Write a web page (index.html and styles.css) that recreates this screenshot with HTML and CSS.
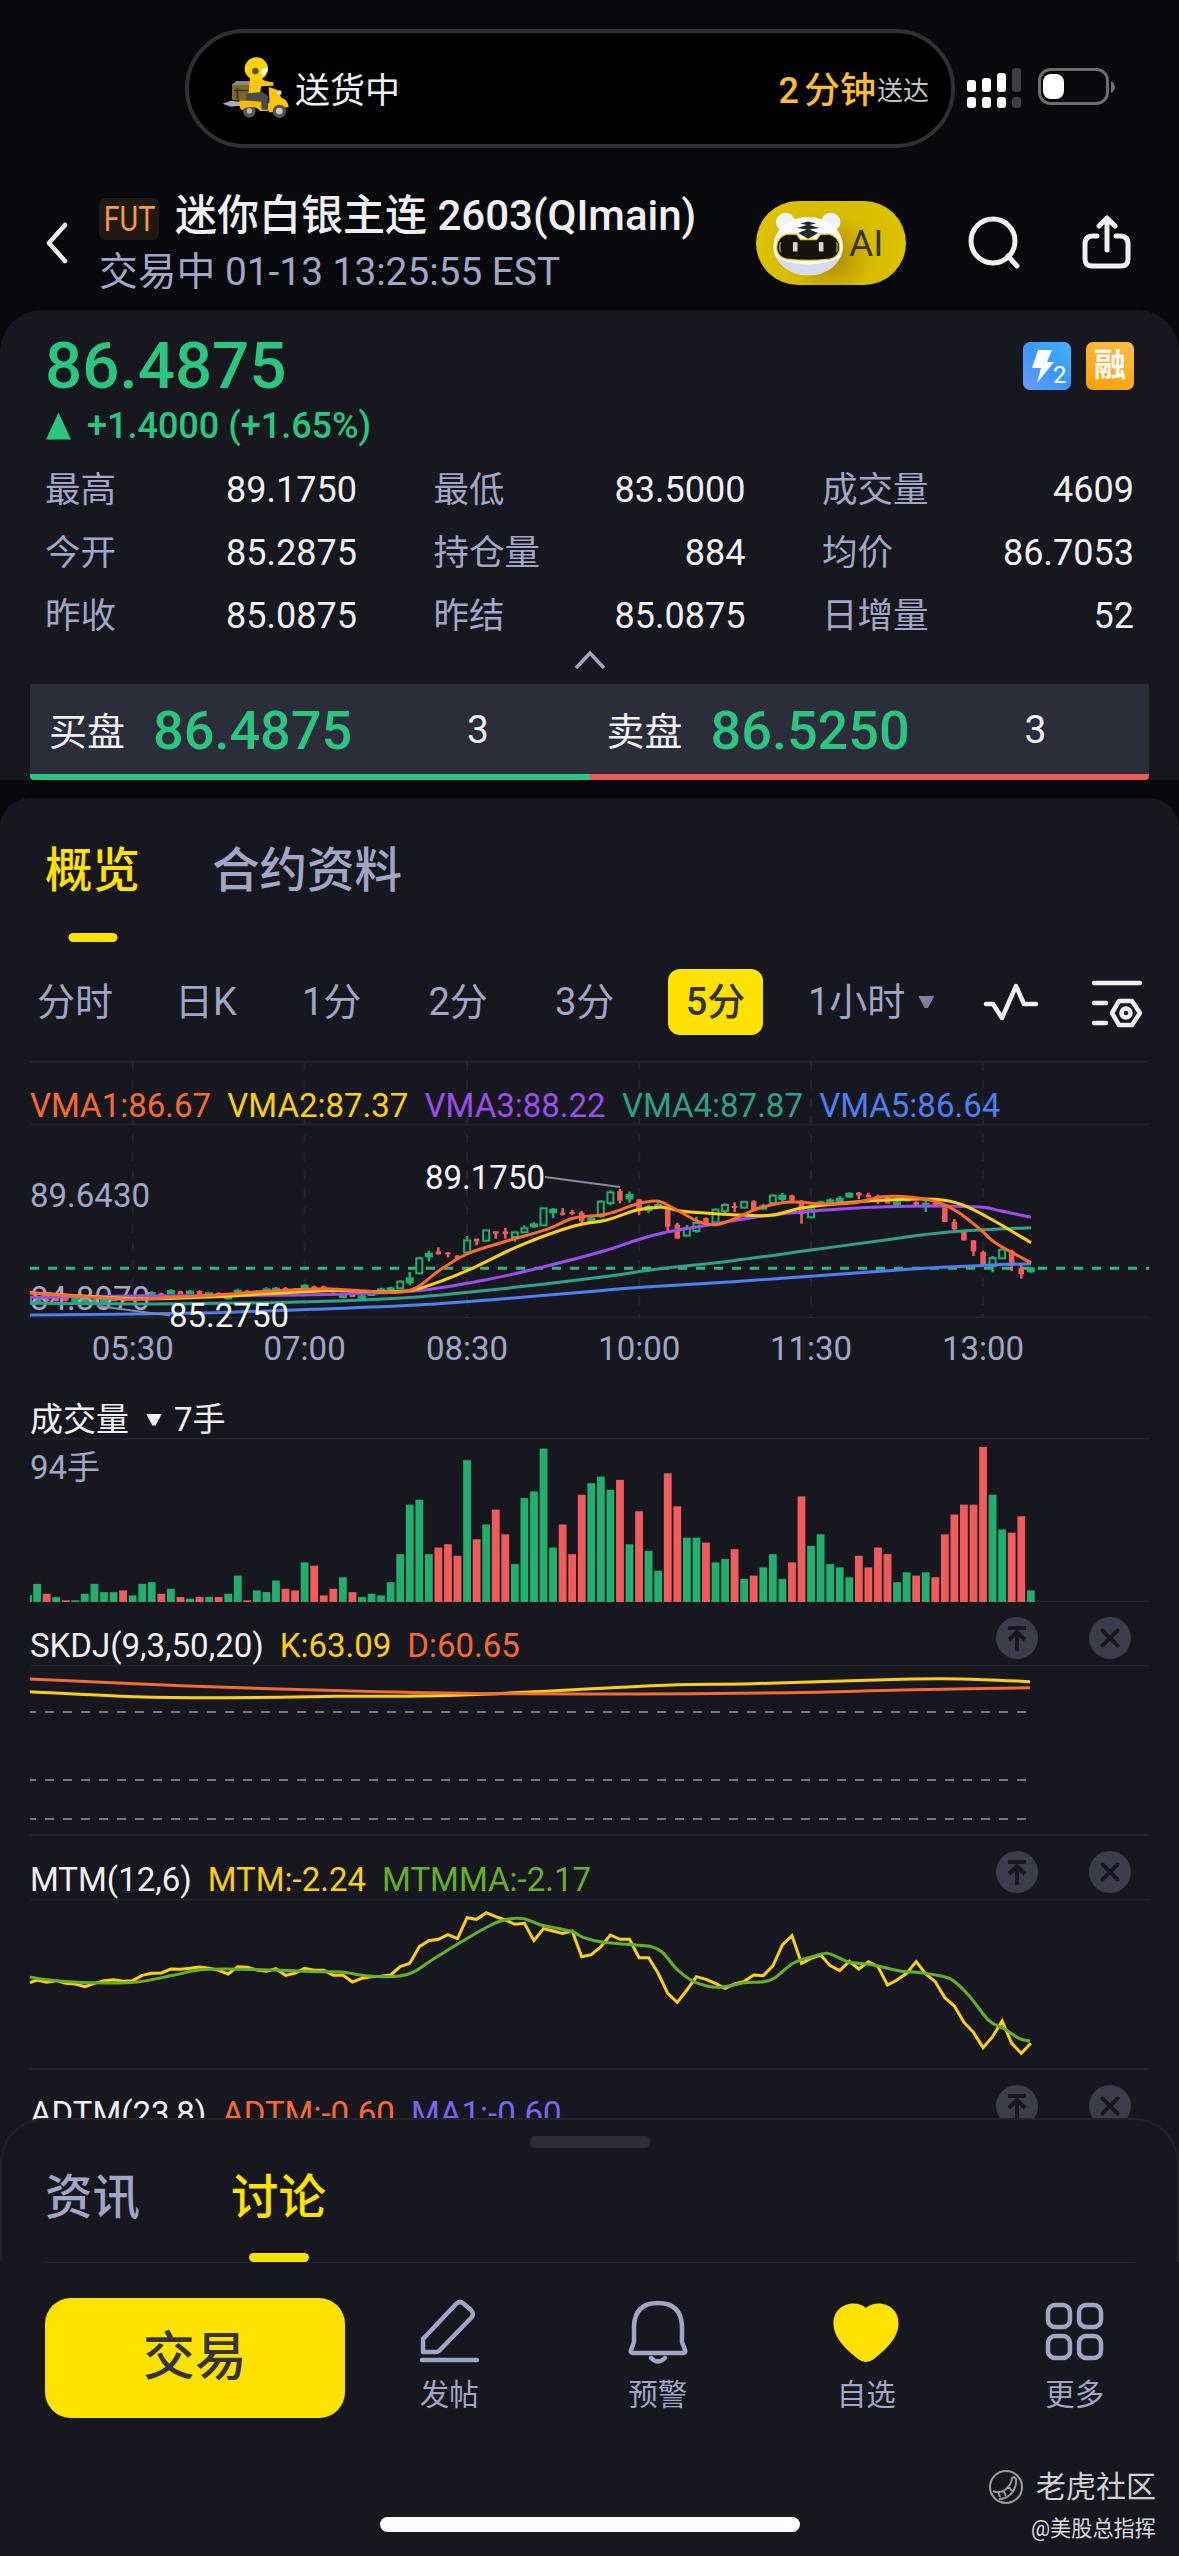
FILE: index.html
```html
<!DOCTYPE html>
<html lang="zh-CN">
<head>
    <meta charset="UTF-8">
    <meta name="viewport" content="width=device-width, initial-scale=1.0">
    <title>迷你白银主连 2603(QImain)</title>
    <link rel="stylesheet" href="styles.css">
</head>
<body>
    <!-- 状态栏 -->
    <div class="status-bar">
        <div class="island">
            <svg class="rider" viewBox="36 44 204 192">
                <path d="M38 190 L62 181 L92 184 L90 196 L62 199Z" fill="#aab"/>
                <circle cx="118" cy="213" r="19" fill="#555"/><circle cx="118" cy="212" r="8" fill="#bbb"/>
                <path d="M88 180h70l22 10-4 22h-26q-8-12-28-12-18 0-24 10-12-4-10-30z" fill="#f3bb08"/>
                <rect x="66" y="128" width="54" height="52" rx="5" fill="#7a6a22"/>
                <path d="M66 134l12-12h42v12z" fill="#8b8b8b"/>
                <path d="M72 148h44v5H72zM80 142h5v34h-5z" fill="#2e2b22"/>
                <path d="M120 112l26-2 20 12 24 4v10l-36 2-4 22-34-2z" fill="#ffc60c"/>
                <path d="M106 160l50-6 18 12v42h-20v-24l-46-4z" fill="#4b4b4d"/>
                <path d="M176 140l26 8 12 24q20 6 22 28l-14 2q-10-8-24 0l-4 14h-18l2-40z" fill="#ffc505"/>
                <circle cx="208" cy="157" r="7" fill="#ddd"/>
                <circle cx="208" cy="213" r="20" fill="#555"/><circle cx="208" cy="212" r="10" fill="#ccc"/>
                <ellipse cx="139" cy="85" rx="35" ry="34" fill="#ffd20a"/>
                <path d="M158 86l15-4q-2 18-16 22-7-8 1-18z" fill="#fff"/>
                <circle cx="136" cy="92" r="10" fill="#5b552c"/>
            </svg>
            <span class="island-title">送货中</span>
            <span class="eta"><i>2</i>分钟</span>
            <span class="eta-tail">送达</span>
        </div>
        <svg class="signal" viewBox="0 0 56 42">
            <g fill="#fff">
                <rect x="1" y="14" width="9" height="12" rx="3"/><rect x="16" y="12" width="9" height="14" rx="3"/>
                <rect x="31" y="7" width="9" height="19" rx="3"/>
                <rect x="1" y="31" width="9" height="11" rx="3"/><rect x="16" y="31" width="9" height="11" rx="3"/>
                <rect x="31" y="31" width="9" height="11" rx="3"/>
            </g>
            <g fill="#3c3d40"><rect x="46" y="2" width="9" height="24" rx="3"/><rect x="46" y="31" width="9" height="11" rx="3"/></g>
        </svg>
        <svg class="battery" viewBox="0 0 80 40">
            <rect x="2.5" y="2.5" width="68" height="34" rx="11" fill="none" stroke="#6d6d70" stroke-width="3"/>
            <rect x="6" y="7" width="21" height="25" rx="8" fill="#fff"/>
            <path d="M74 14q4 2 4 6t-4 6z" fill="#6d6d70"/>
        </svg>
    </div>

    <!-- 标题 -->
    <div class="header">
        <svg class="back" viewBox="0 0 24 44"><path d="M20 4L4 22l16 18"/></svg>
        <div class="header-info">
            <div class="name-row">
                <span class="fut"><i>FUT</i></span>
                <h1>迷你白银主连 2603(QImain)</h1>
            </div>
            <div class="trade-time">交易中 01-13 13:25:55 EST</div>
        </div>
        <div class="ai-btn">
            <svg viewBox="96 62 220 200">
                <circle cx="137" cy="98" r="29" fill="#f1f3fb"/><circle cx="273" cy="98" r="29" fill="#f1f3fb"/>
                <ellipse cx="205" cy="170" rx="105" ry="88" fill="#fbfbff"/>
                <path d="M112 205q90 40 188 0-22 50-95 52-72-2-93-52z" fill="#d6daea"/>
                <path d="M140 134h30l12 16h48l12-16h28q30 10 30 39t-30 36q-64 8-130 0-30-7-30-36t30-39z" fill="#17120c" stroke="#e4d71b" stroke-width="4"/>
                <path d="M205 96l-24 6 20 4-30 9 30 5-26 10 30 18 30-18-26-10 30-5-30-9 20-4z" fill="#25272c"/>
                <rect x="159" y="158" width="14" height="28" fill="#d5d5d5"/><rect x="237" y="158" width="14" height="28" fill="#d5d5d5"/>
                <path d="M122 158q-6 14 0 30M290 158q6 14 0 30" stroke="#777" stroke-width="6" fill="none"/>
            </svg>
            <span>AI</span>
        </div>
        <svg class="head-icon search" viewBox="0 0 60 60"><circle cx="26" cy="28" r="22"/><path d="M41 43l9 10"/></svg>
        <svg class="head-icon share" viewBox="0 0 60 60"><path d="M20 23h-4q-8 0-8 8v15q0 7 7 7h29q7 0 7-7V31q0-8-8-8h-4M30 37V6M22 13l8-8 8 8"/></svg>
    </div>

    <!-- 行情 -->
    <div class="quote-card">
        <div class="price-row">
            <span class="price">86.4875</span>
            <svg class="tag" viewBox="0 0 48 48">
                <defs><linearGradient id="blue" x1="0" y1="1" x2="1" y2="0"><stop offset="0" stop-color="#6b9dff"/><stop offset=".5" stop-color="#3b97fa"/><stop offset="1" stop-color="#45b4f8"/></linearGradient></defs>
                <rect width="48" height="48" rx="7" fill="url(#blue)"/>
                <path d="M15 8h14l-5 12h7L14 41l4-15h-9z" fill="#fff"/>
                <text x="30" y="41" font-size="24" fill="#fff">2</text>
            </svg>
            <span class="tag rong">融</span>
        </div>
        <div class="change"><i class="up"></i>+1.4000 (+1.65%)</div>
        <div class="stats">
            <div><label>最高</label><b>89.1750</b></div>
            <div><label>最低</label><b>83.5000</b></div>
            <div><label>成交量</label><b>4609</b></div>
            <div><label>今开</label><b>85.2875</b></div>
            <div><label>持仓量</label><b>884</b></div>
            <div><label>均价</label><b>86.7053</b></div>
            <div><label>昨收</label><b>85.0875</b></div>
            <div><label>昨结</label><b>85.0875</b></div>
            <div><label>日增量</label><b>52</b></div>
        </div>
        <svg class="fold" viewBox="0 0 32 20"><path d="M2 18L16 3l14 15"/></svg>
        <div class="order-book">
            <div class="side buy"><span>买盘</span><b>86.4875</b><em>3</em></div>
            <div class="side sell"><span>卖盘</span><b>86.5250</b><em>3</em></div>
        </div>
    </div>

    <!-- 图表 -->
    <div class="chart-card">
        <div class="tabs">
            <span class="tab active">概览</span>
            <span class="tab">合约资料</span>
        </div>
        <div class="periods">
            <span>分时</span><span>日K</span><span>1分</span><span>2分</span><span>3分</span>
            <span class="on">5分</span>
            <span class="hour">1小时<i class="down"></i></span>
            <svg class="wave" viewBox="0 0 56 40"><path d="M3 22h7l9 14L33 4l8 18h12"/></svg>
            <svg class="setting" viewBox="0 0 54 52">
                <path d="M4 4h46M4 24h12M4 44h12"/>
                <path d="M29 22h13l8 12-8 12H29l-7-12z"/><circle cx="36" cy="34" r="4.5"/>
            </svg>
        </div>

        <svg id="kline" width="1179" height="314" viewBox="0 1061 1179 314"></svg>

        <div class="panel-head volume-head">
            <span class="w">成交量</span><i class="down white"></i><span class="w">7手</span>
        </div>
        <svg id="volume" width="1179" height="164" viewBox="0 1438 1179 164"></svg>

        <div class="panel-head">
            <span class="w">SKDJ(9,3,50,20)</span><span class="c-yellow">K:63.09</span><span class="c-orange">D:60.65</span>
            <svg class="ctl first" viewBox="0 0 42 42"><use href="#top"/></svg>
            <svg class="ctl" viewBox="0 0 42 42"><use href="#close"/></svg>
        </div>
        <svg id="skdj" width="1179" height="171" viewBox="0 1665 1179 171"></svg>

        <div class="panel-head">
            <span class="w">MTM(12,6)</span><span class="c-yellow">MTM:-2.24</span><span class="c-green">MTMMA:-2.17</span>
            <svg class="ctl first" viewBox="0 0 42 42"><use href="#top"/></svg>
            <svg class="ctl" viewBox="0 0 42 42"><use href="#close"/></svg>
        </div>
        <svg id="mtm" width="1179" height="171" viewBox="0 49 1179 171"></svg>

        <div class="panel-head">
            <span class="w">ADTM(23,8)</span><span class="c-orange">ADTM:-0.60</span><span class="c-violet">MA1:-0.60</span>
            <svg class="ctl first" viewBox="0 0 42 42"><use href="#top"/></svg>
            <svg class="ctl" viewBox="0 0 42 42"><use href="#close"/></svg>
        </div>
    </div>

    <!-- 底部 -->
    <div class="sheet">
        <div class="sheet-top">
            <div class="handle"></div>
            <div class="sheet-tabs">
                <span class="tab">资讯</span>
                <span class="tab active">讨论</span>
            </div>
        </div>
        <div class="toolbar">
            <div class="trade-btn">交易</div>
            <div class="tool">
                <svg viewBox="0 0 72 72"><path d="M10 56V43L43 8q4-4 8 0l7 6q4 4 0 8L26 55q-1 1-3 1zM9 64h55"/></svg>
                发帖
            </div>
            <div class="tool">
                <svg viewBox="0 0 72 72"><path d="M12 46V30Q13 7 36 7t24 23v16l3 8q1 3-2 3H11q-3 0-2-3z"/><path d="M29 62q7 7 14 0"/></svg>
                预警
            </div>
            <div class="tool">
                <svg viewBox="0 0 72 72"><path class="heart" d="M36 12C27 3 3 7 3.500 28 4 43 17 54 28 63q8 6 16 0C55 54 68 43 68.500 28 69 7 45 3 36 12z"/></svg>
                自选
            </div>
            <div class="tool">
                <svg viewBox="0 0 72 72"><rect x="9" y="9" width="22" height="22" rx="7"/><rect x="40" y="9" width="22" height="22" rx="7"/><rect x="9" y="40" width="22" height="22" rx="7"/><rect x="40" y="40" width="22" height="22" rx="7"/></svg>
                更多
            </div>
        </div>
        <div class="home-bar"></div>
        <div class="watermark">
            <div class="brand">
                <svg viewBox="0 0 36 36"><circle cx="18" cy="18" r="16"/><path d="M5 22q6 3 12-1 7-6 7-12 2-2 4 1 1 9-6 16-5 4-11 4M10 22l2 6M15 21l3 6M20 17l4 5"/></svg>
                老虎社区
            </div>
            <div class="author">@美股总指挥</div>
        </div>
    </div>

    <svg width="0" height="0" class="defs">
        <symbol id="top" viewBox="0 0 42 42"><circle cx="21" cy="21" r="21" fill="#3c3d4c"/><path d="M12 11h18M21 34V15M13 23l8-8 8 8" fill="none" stroke="#17181f" stroke-width="4"/></symbol>
        <symbol id="close" viewBox="0 0 42 42"><circle cx="21" cy="21" r="21" fill="#3c3d4c"/><path d="M13.500 13.500l15 15M28.500 13.500l-15 15" fill="none" stroke="#17181f" stroke-width="4" stroke-linecap="round"/></symbol>
    </svg>
    <script src="chart.js"></script>
</body>
</html>
```
FILE: styles.css
```css
:root {
    --bg: #07090c;
    --card: #17181f;
    --muted: #a3a5c6;
    --text: #f0f0f2;
    --green: #2bc57f;
    --red: #ee5a5a;
    --yellow: #ffe200;
}

* { box-sizing: border-box; }

body {
    margin: 0;
    width: 1179px;
    height: 2556px;
    overflow: hidden;
    position: relative;
    background: var(--bg);
    color: var(--text);
    font-family: Roboto, 'Noto Sans CJK SC', sans-serif;
}

i, em { font-style: normal; }
svg { display: block; flex: none; }
.defs { position: absolute; }

/* 状态栏 */
.status-bar {
    display: flex;
    align-items: flex-start;
    height: 190px;
    padding: 29px 0 0 185px;
}

.island {
    display: flex;
    align-items: center;
    width: 770px;
    height: 119px;
    padding: 0 22px 0 33px;
    border: 4px solid #303032;
    border-radius: 60px;
    background: #000;
}

.rider { width: 68px; height: 64px; margin-top: -4px; }
.island-title { margin: -3px 0 0 5px; font-size: 35px; }
.eta { margin: -3px 0 0 auto; font-size: 36px; font-weight: 500; color: #f9bd30; }
.eta i { margin-right: 5px; }
.eta-tail { margin: -1px 0 0 1px; font-size: 26px; color: #c4c4c4; }
.signal { width: 56px; height: 42px; margin: 37px 0 0 11px; }
.battery { width: 80px; height: 40px; margin: 38px 0 0 15px; }

/* 标题 */
.header {
    display: flex;
    align-items: center;
    height: 120px;
    padding-left: 45px;
}

.back { width: 24px; height: 44px; margin-top: -15px; fill: none; stroke: var(--text); stroke-width: 4.500; stroke-linecap: round; stroke-linejoin: round; }
.header-info { width: 656px; margin: -12px 0 0 30px; }
.name-row { display: flex; align-items: center; height: 56px; }

.fut {
    display: flex;
    justify-content: center;
    width: 60px;
    height: 42px;
    margin: 5px 16px 0 0;
    border-radius: 6px;
    background: #201813;
    color: #f4994a;
    font-size: 35px;
    line-height: 43px;
}

.fut i { transform: scaleX(.82); }

h1 { margin: 0; font-size: 42px; font-weight: 500; line-height: 56px; white-space: nowrap; }
.trade-time { color: var(--muted); font-size: 38.800px; line-height: 56px; }

.ai-btn {
    display: flex;
    align-items: center;
    width: 150px;
    height: 84px;
    margin: -14px 1px 0 1px;
    padding-left: 16px;
    border-radius: 42px;
    background: radial-gradient(circle at 50% 65%, #a98a05, #d7bb00 45%, #dfc600);
    color: #35343b;
    font-size: 37px;
}

.ai-btn svg { width: 73px; height: 67px; margin-right: 4px; }

.head-icon { width: 60px; height: 60px; margin-top: -14px; fill: none; stroke: var(--text); stroke-width: 5; stroke-linecap: round; stroke-linejoin: round; }
.search { margin-left: 60px; }
.share { margin-left: 50px; }

/* 行情 */
.quote-card {
    height: 470px;
    padding: 0 30px;
    border-radius: 42px 42px 0 0;
    background: var(--card);
}

.price-row { display: flex; align-items: center; height: 110px; padding: 1px 15px 0 15px; }
.price { margin-right: auto; color: var(--green); font-size: 65.500px; font-weight: 500; }
.tag { width: 48px; height: 48px; margin-left: 15px; }

.rong {
    border-radius: 7px;
    background: linear-gradient(200deg, #fbbd4a, #f9a005);
    color: #fff;
    font-size: 32px;
    font-weight: 700;
    line-height: 47px;
    text-align: center;
}

.change {
    display: flex;
    align-items: center;
    height: 36px;
    margin-top: -12px;
    padding-left: 16px;
    color: var(--green);
    font-size: 36px;
    font-weight: 500;
}

.up {
    width: 25px;
    height: 27px;
    margin-right: 16px;
    background: currentColor;
    clip-path: polygon(50% 0, 100% 100%, 0 100%);
}

.stats {
    display: grid;
    grid-template-columns: repeat(3, 312px);
    justify-content: space-between;
    margin-top: 14px;
    padding: 0 15px;
}

.stats div { display: flex; justify-content: space-between; font-size: 36px; line-height: 63px; height: 63px; padding-top: 1px; }
.stats label { color: var(--muted); font-size: 35.500px; }
.stats b { font-weight: 400; }

.fold { width: 32px; height: 20px; margin: 3px auto 14px; fill: none; stroke: var(--muted); stroke-width: 3.500; }

.order-book { display: grid; grid-template-columns: 1fr 1fr; border-radius: 0 0 4px 4px; overflow: hidden; }
.side { display: flex; align-items: center; height: 96px; background: #2c2d3b; border-bottom: 6px solid var(--green); }
.side.sell { border-color: var(--red); }
.side span { width: 104px; margin: -2px 0 0 19px; font-size: 38px; }
.side b { width: 314px; padding-top: 2px; color: var(--green); font-size: 54px; font-weight: 500; }
.side em { padding-top: 2px; font-size: 39px; }
.sell span { margin-left: 17px; }

/* 图表 */
.chart-card {
    height: 1400px;
    margin-top: 18px;
    border-radius: 30px 30px 0 0;
    background: var(--card);
}

.tab { position: relative; color: var(--muted); font-size: 47.500px; font-weight: 500; line-height: 70px; }
.tab.active { color: var(--yellow); }

.tab.active::after {
    content: '';
    position: absolute;
    left: 50%;
    bottom: -36px;
    width: 49px;
    height: 9px;
    border-radius: 5px;
    background: var(--yellow);
    transform: translateX(-50%);
}

.tabs { display: flex; align-items: flex-start; gap: 72px; height: 171px; padding: 38px 0 0 45px; }

.periods { display: flex; align-items: center; height: 66px; margin-bottom: 26px; padding-left: 37px; color: var(--muted); font-size: 38px; line-height: 66px; }
.periods span { width: 126.500px; white-space: nowrap; }
.periods span:first-child { width: 138px; }
.periods span:nth-child(2) { width: 127px; }
.periods span:nth-child(5) { width: 113px; }
.periods .on { width: 95px; border-radius: 12px; background: var(--yellow); color: #35343b; font-weight: 500; text-align: center; }
.periods .hour { display: flex; align-items: center; width: 175px; margin-left: 45px; }

.down { width: 16px; height: 12px; margin-left: 13px; background: #7f8199; clip-path: polygon(0 0, 100% 0, 60% 100%, 40% 100%); }
.down.white { margin: 0 12px 0 17px; background: var(--text); }

.wave { width: 56px; height: 40px; }
.setting { width: 54px; height: 52px; margin: 6px 0 0 51px; }
.wave, .setting { fill: none; stroke: var(--text); stroke-width: 4.500; stroke-linecap: round; stroke-linejoin: round; }

.panel-head { display: flex; align-items: center; height: 63px; padding: 9px 48px 0 30px; font-size: 33px; line-height: 40px; }
.panel-head span { padding-top: 15px; margin-right: 16px; }
.volume-head span { padding-top: 17px; margin-right: 0; }
.volume-head .down { margin-top: 17px; }
.ctl { width: 42px; height: 42px; }
.ctl.first { margin-left: auto; margin-right: 51px; }

.c-yellow { color: #f9cf12; }
.c-orange { color: #f56a32; }
.c-green { color: #66b028; }
.c-violet { color: #7b66ee; }

#kline text, #volume text { font-size: 33px; }

/* 底部 */
.sheet {
    position: absolute;
    left: 0;
    right: 0;
    bottom: 0;
    height: 438px;
    border-radius: 45px 45px 0 0;
    background: var(--card);
}

.sheet-top { height: 144px; padding-top: 16px; border: 2px solid #22232b; border-bottom: 0; border-radius: 45px 45px 0 0; }
.handle { width: 120px; height: 12px; margin: 0 auto; border-radius: 5px; background: #2d2d3a; }
.sheet-tabs { display: flex; gap: 91px; height: 115px; margin: 0 42px; padding: 15px 1px 0; border-bottom: 1px solid #24252e; }
.sheet-tabs .tab.active::after { width: 60px; bottom: -29px; }
.sheet-tabs .tab { height: 70px; }

.toolbar { display: flex; padding: 36px 0 0 45px; }
.trade-btn { width: 300px; height: 120px; border-radius: 26px; background: var(--yellow); color: #35343b; font-size: 52px; font-weight: 500; line-height: 120px; text-align: center; }
.tool { width: 208.500px; color: var(--muted); font-size: 29.500px; line-height: 40px; text-align: center; }
.tool svg { width: 72px; height: 72px; margin: -2px auto 7px; fill: none; stroke: var(--muted); stroke-width: 4.500; stroke-linecap: round; stroke-linejoin: round; }
.tool .heart { fill: var(--yellow); stroke: none; }

.home-bar { width: 420px; height: 15px; margin: 99px auto 0; border-radius: 8px; background: #fff; }

.watermark { position: absolute; right: 23px; bottom: 12px; text-align: right; }
.brand { display: flex; align-items: center; justify-content: flex-end; color: #d0d0d4; font-size: 30px; line-height: 44px; }
.brand svg { width: 36px; height: 36px; margin-right: 12px; fill: none; stroke: #9a9aa0; stroke-width: 2; }
.author { margin-top: 5px; color: #dadade; font-size: 21.200px; line-height: 30px; }
```
FILE: chart.js
```js
const STEP = 9.555;
const X0 = 37.1;
const GREEN = '#22ae6c', RED = '#f05b5b';
const LINE = '#23242d';

const xAt = i => X0 + i * STEP;

// 样条曲线
function curve(points, color, width = 3) {
    const p = points.trim().split(/\s+/).map(s => s.split(',').map(Number));
    let d = `M${p[0]}`;
    for (let i = 0; i < p.length - 1; i++) {
        const a = p[i - 1] || p[i], b = p[i], c = p[i + 1], e = p[i + 2] || c;
        d += `C${b[0] + (c[0] - a[0]) / 6},${b[1] + (c[1] - a[1]) / 6} ${c[0] - (e[0] - b[0]) / 6},${c[1] - (e[1] - b[1]) / 6} ${c}`;
    }
    return `<path d="${d}" fill="none" stroke="${color}" stroke-width="${width}"/>`;
}

function hline(y, x2 = 1149, extra = '') {
    return `<path d="M30 ${y}H${x2}" stroke="${LINE}" stroke-width="1.5" ${extra}/>`;
}

// 成交量，正数为涨，负数为跌
const volumes = [
    11, -5, 3, -1, 1, 5, 11, 6, 6, -7, 4, 11, 12, -5, 8, -3, 2, -3, 3, -3, 5, 16, -1, 7, 6, 13, -8, -7, 24, -22,
    -4, -8, 15, -6, 3, 5, 4, 12, 29, 59, 62, 29, -33, -35, -28, 86, -38, 47, -56, -41, 23, 63, 67, 93, 33, -47, -29, -65,
    72, 76, 68, -74, 35, -55, 31, 19, -78, -58, 39, 39, -36, 24, 26, -32, 14, -16, 21, 29, 14, -24, -64, 34, 41, 23, 21, 15,
    -28, -21, -33, -29, 12, 18, -16, 18, -15, -41, -53, -59, -59, -94, 65, 44, -42, -52, 7
];

// K线: 类型(g空心 G实心 r跌), 最高, 实体上, 实体下, 最低
const candles = `
G,708,708,732,732 r,704,706,724,726 r,708,708,724,724 r,706,708,722,724 G,712,714,730,730 g,714,716,728,728
G,716,718,732,732 G,712,714,730,730 g,710,712,724,724 r,710,712,724,724 g,708,710,720,720 g,702,704,716,716
G,694,696,706,706 r,698,700,708,708 g,688,690,702,702 r,692,694,703,703 G,690,692,702,702 r,691,693,703,703
g,695,697,705,705 r,697,699,707,707 G,706,708,718,718 g,686,689,701,701 r,690,692,701,701 G,690,692,700,700
g,682,685,696,696 G,681,683,692,692 r,681,684,692,692 r,684,686,694,694 g,672,674,685,685 r,677,679,686,688
r,677,679,686,688 r,688,690,697,698 G,700,703,714,714 r,702,705,711,711 G,704,706,718,718 G,699,701,708,708
G,683,685,693,693 G,680,682,691,692 g,660,662,688,688 G,636,652,670,676 g,590,592,643,643 G,572,578,592,604
r,562,574,583,583 r,576,578,583,592 r,585,587,597,597 g,528,538,580,580 r,536,536,544,556 g,508,508,545,545
r,514,514,521,536 r,504,514,522,536 g,512,514,534,545 g,496,502,520,520 G,487,490,502,504 g,442,442,499,499
G,444,446,460,474 r,444,458,464,467 r,450,456,462,465 r,453,458,484,492 G,470,472,487,487 g,420,422,472,474
g,391,394,432,436 r,386,393,422,430 G,395,402,418,428 r,417,418,446,465 G,434,438,453,458 G,430,432,441,441
r,440,448,500,514 r,488,494,536,536 g,495,502,530,530 g,470,486,516,518 r,472,474,490,490 g,444,446,490,496
g,430,432,456,460 r,427,438,444,456 g,422,423,446,446 r,421,424,448,448 G,431,436,449,449 g,402,404,432,434
G,399,404,420,424 r,404,406,422,424 r,420,422,462,491 g,440,445,475,475 G,422,424,436,436 G,415,418,431,431
G,408,413,427,427 G,397,398,413,413 r,396,398,406,418 r,398,404,412,412 r,404,408,424,432 r,410,412,430,430
G,422,424,436,436 G,410,412,424,424 r,424,426,436,438 g,420,428,442,456 r,426,428,440,442 r,440,442,486,486
r,477,485,508,510 r,513,516,541,542 r,540,541,574,588 r,572,576,612,614 g,588,591,622,637 g,563,566,598,598
r,569,572,618,633 r,614,624,642,656 G,621,622,637,638`.trim().split(/\s+/).map(s => s.split(','));

function drawKline() {
    const grid = [132.8, 304.6, 467, 639.2, 811, 983];
    const times = ['05:30', '07:00', '08:30', '10:00', '11:30', '13:00'];
    let s = hline(1061.8) + hline(1124.5) + hline(1317.5);
    grid.forEach((x, i) => {
        s += `<path d="M${x} 1062V1317" stroke="${LINE}" stroke-width="2" stroke-dasharray="9 9"/>`;
        s += `<text x="${x}" y="1360" text-anchor="middle" fill="#a3a5c6">${times[i]}</text>`;
    });
    s += `<path d="M30 1268.300H1149" stroke="#2fb878" stroke-width="3" stroke-dasharray="9 9"/>`;

    s += `<path d="M30 1296h2v8h-2z" fill="${GREEN}"/>`;
    candles.forEach(([t, ...v], i) => {
        const [h, a, b, l] = v.map(n => 1060 + n / 3);
        const x = xAt(i), c = t === 'r' ? RED : GREEN, w = t === 'r' ? 5.5 : 8;
        if (t === 'g') {
            s += `<path d="M${x} ${h}V${a}M${x} ${b}V${l}" stroke="${c}" stroke-width="2.500"/>`;
            s += `<rect x="${x - 3}" y="${a + 1}" width="6" height="${Math.max(b - a - 2, 1)}" fill="none" stroke="${c}" stroke-width="2"/>`;
        } else {
            s += `<path d="M${x} ${h}V${l}" stroke="${c}" stroke-width="2.500"/>`;
            s += `<rect x="${x - w / 2}" y="${a}" width="${w}" height="${b - a}" fill="${c}"/>`;
        }
    });

    s += `<text x="30" y="1206.500" fill="#a3a5c6">89.6430</text><text x="30" y="1310" fill="#a3a5c6">84.8070</text>`;

    s += curve('30,1315 115,1314.3 214,1312.7 314,1309.3 417,1305 497.5,1299.3 600,1290.7 641,1287.3 733,1281.7 824.5,1275.3 916,1268.7 985,1265.3 1031,1263.7', '#4c7ff0');
    s += curve('30,1303.3 153,1304 268,1302.7 344,1300.7 421,1296.7 497.5,1289.3 600,1277.3 656.4,1269.3 733,1260.7 809,1250.3 885.6,1240 924,1234.7 962,1231 1031,1227.7', '#2fa08a');
    s += curve('30,1297.3 134,1296 268,1295.3 344,1294 417,1290.7 478,1281.3 536,1268.7 603,1251.3 637,1240 664,1232.7 710,1224.7 763,1216 817,1210.7 885.6,1206.7 973.5,1206.7 1000,1210.7 1031,1217.3', '#9b4dee');
    s += curve('30,1292.7 134,1298.7 214,1296.7 325,1290.7 383,1291.7 413,1290 444,1280 474.5,1267.3 520.5,1245.3 574,1226 606.7,1220 637,1210 662,1207.3 683,1211.3 733,1214.7 771,1215.3 801.6,1208 847,1202.7 885.6,1200 935,1199.3 962,1204.7 992.6,1220 1031,1242.7', '#fccf17');
    s += curve('30,1292.7 76.5,1296 134,1299.3 172,1297.3 214,1295.3 268,1291.3 325,1288.7 367,1291.3 398,1292.3 417,1287.3 440,1270 467,1254 501,1242.7 547,1229.3 574,1218 607,1214 637,1204 658,1201.3 675.5,1209.3 698,1221.3 715.6,1224.7 733,1219.3 759.5,1208 790,1202 824.5,1204 855,1202.7 882,1196.7 912,1197.3 939,1202.7 958,1212 981,1230 996,1243.3 1031,1262.7', '#fb6b2b');

    s += `<path d="M545 1177L620 1187M98 1306L170 1315.500" stroke="#8788a0" stroke-width="2"/>`;
    s += `<text x="425" y="1189" fill="#f5f5f7">89.1750</text><text x="169" y="1327" fill="#f5f5f7">85.2750</text>`;

    [['VMA1:86.67', '#f56a32'], ['VMA2:87.37', '#f9cf12'], ['VMA3:88.22', '#9b4dee'], ['VMA4:87.87', '#2fa08a'], ['VMA5:86.64', '#4c7ff0']].forEach(([t, c], i) => {
        s += `<text x="${30 + i * 197.3}" y="1117" fill="${c}">${t}</text>`;
    });
    document.getElementById('kline').innerHTML = s;
}

function drawVolume() {
    let s = hline(1438.8) + hline(1601.5);
    s += `<text x="30" y="1478.500" fill="#a3a5c6">94手</text>`;
    s += `<rect x="30" y="1595" width="2" height="7" fill="${GREEN}"/>`;
    volumes.forEach((v, i) => {
        const h = Math.abs(v) * 1.65;
        s += `<rect x="${xAt(i) - 3.9}" y="${1602 - h}" width="7.800" height="${h}" fill="${v > 0 ? GREEN : RED}"/>`;
    });
    document.getElementById('volume').innerHTML = s;
}

function drawSkdj() {
    let s = hline(1665.5) + hline(1835);
    [1712, 1780, 1819].forEach(y => {
        s += `<path d="M30 ${y}H1030" stroke="#777986" stroke-width="2" stroke-dasharray="9 9" stroke-dashoffset="3"/>`;
    });
    s += curve('30,1691.7 135,1696.7 225.6,1697.7 338,1696.3 421,1696 496,1693.7 586.5,1689 677,1684.7 752,1683.7 902,1679.3 962,1679 1030,1681.7', '#fccf17');
    s += curve('30,1679 188,1686 361,1691.3 489,1693.7 639,1694 789.5,1692.7 902,1690 1030,1687.7', '#f56a32');
    document.getElementById('skdj').innerHTML = s;
}

const mtm = [
    398, 390, 397, 392, 400, 402, 410, 400, 392, 389, 394, 392, 376, 370, 369, 357, 358, 355, 351, 355, 361, 372, 350, 352, 360, 364, 356,
    376, 369, 355, 361, 361, 376, 375, 396, 385, 380, 379, 375, 350, 340, 290, 272, 268, 254, 266, 203, 208, 188, 200, 210, 223, 220, 272,
    236, 243, 250, 243, 320, 314, 290, 255, 268, 268, 323, 323, 370, 430, 457, 420, 380, 388, 400, 415, 402, 394, 375, 377, 348, 285, 257,
    340, 325, 315, 347, 362, 334, 357, 335, 350, 405, 390, 370, 335, 372, 395, 443, 468, 517, 547, 593, 560, 513, 580, 610, 580
];

function drawMtm() {
    let s = hline(49.5) + hline(219);
    const pts = mtm.map((v, i) => `${Math.max(30, xAt(i - 1))},${v / 3}`).join(' ');
    s += `<polyline points="${pts}" fill="none" stroke="#fccf17" stroke-width="3"/>`;
    s += curve('30,127.3 56,130.7 90,132.7 135,132.3 173,125.3 199,120 226,119 271,120 316,121.7 342,122 368,126 398.5,126.3 413.5,122 432,110 459,93.3 489,76 507.5,69.3 524,68.7 541,75 571,81.3 583,87.3 601.5,92 639,95.3 650,96.3 662,102 677,119.3 692,130.7 707,136 718,137.3 729,136 744,132.7 763,131.7 774.5,128 793,113.3 812,106.7 827,103.3 838,107.3 850,112.3 872,114.7 902,121.3 917,122.3 944,126.7 955,132 970,146.7 989,170.7 1004,178.7 1019,188.3 1030,191', '#66b028');
    document.getElementById('mtm').innerHTML = s;
}

drawKline();
drawVolume();
drawSkdj();
drawMtm();
```
